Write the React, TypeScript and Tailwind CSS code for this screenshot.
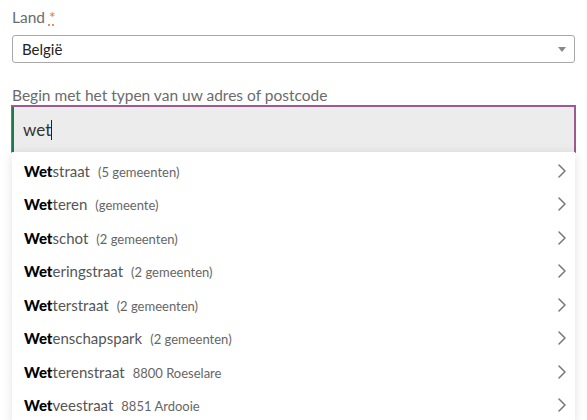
import { ChevronRight } from "lucide-react";

const suggestions = [
  { rest: "straat", meta: "(5 gemeenten)" },
  { rest: "teren", meta: "(gemeente)" },
  { rest: "schot", meta: "(2 gemeenten)" },
  { rest: "eringstraat", meta: "(2 gemeenten)" },
  { rest: "terstraat", meta: "(2 gemeenten)" },
  { rest: "enschapspark", meta: "(2 gemeenten)" },
  { rest: "terenstraat", meta: "8800 Roeselare" },
  { rest: "veestraat", meta: "8851 Ardooie" },
];

export default function App() {
  return (
    <div className="min-h-screen bg-white font-['Lato',sans-serif] px-3 pt-[7px] overflow-hidden">
      {/* Land */}
      <label className="block text-[15.5px] text-[#6b6b6b] leading-5">
        Land{" "}
        <span className="text-[#d97a1f] underline decoration-dotted underline-offset-2">*</span>
      </label>
      <div className="relative mt-[8px] h-[28px] w-[563px] rounded-[3px] border border-[#a9a9a9] flex items-center pl-[9px]">
        <span className="text-[15px] text-[#222]">België</span>
        <span className="absolute right-[8px] top-[11px] w-0 h-0 border-l-[4px] border-r-[4px] border-t-[5px] border-l-transparent border-r-transparent border-t-[#888]" />
      </div>

      {/* Adres */}
      <label className="block mt-[22px] text-[15.5px] text-[#6b6b6b] leading-5">
        Begin met het typen van uw adres of postcode
      </label>
      <div className="relative w-[565px] -ml-px">
        <div className="h-[48px] bg-[#ececec] border-t-2 border-r-2 border-l border-[#9b5a92] border-b border-b-[#d6d6d6] flex items-center">
          <div className="h-full w-[2px] bg-[#1e7a4f]" />
          <span className="ml-[9px] text-[17px] text-[#333] leading-none">wet</span>
          <span className="w-px h-[20px] bg-[#222]" />
        </div>

        {/* Suggestions */}
        <ul className="absolute left-px top-[47px] w-[563px] bg-white pt-[2px] shadow-[0_2px_10px_rgba(0,0,0,0.12)]">
          {suggestions.map((s) => (
            <li key={s.rest} className="h-[33.5px] flex items-center pl-3 pr-px">
              <div className="flex items-baseline">
                <span className="text-[15px] text-[#555]">
                  <b className="font-black text-black">Wet</b>
                  {s.rest}
                </span>
                <span className="ml-[8px] text-[13px] text-[#666]">{s.meta}</span>
              </div>
              <ChevronRight className="ml-auto text-[#777]" size={24} strokeWidth={1.5} />
            </li>
          ))}
        </ul>
      </div>
    </div>
  );
}
